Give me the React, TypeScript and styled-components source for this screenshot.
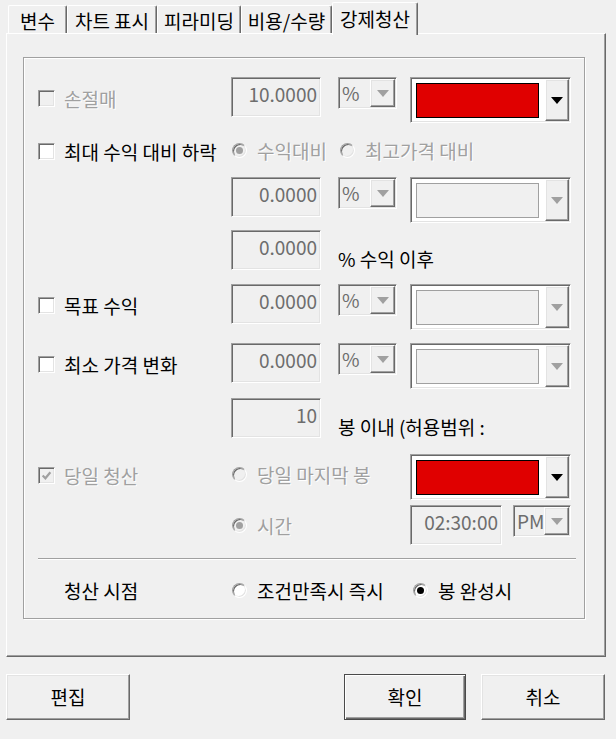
import React from "react";
import styled, { createGlobalStyle, css } from "styled-components";

const GlobalStyle = createGlobalStyle`
  html, body {
    margin: 0;
    padding: 0;
    background: #f0f0f0;
  }
  body {
    font-family: "Noto Sans CJK KR", "Noto Sans", sans-serif;
    font-size: 19px;
    color: #000;
  }
`;

const sunken = css`
  box-sizing: border-box;
  border: 1px solid;
  border-color: #a0a0a0 #ffffff #ffffff #a0a0a0;
  box-shadow: inset 1px 1px 0 #696969, inset -1px -1px 0 #e3e3e3;
`;

const raised = css`
  box-sizing: border-box;
  border: 1px solid;
  border-color: #ffffff #696969 #696969 #ffffff;
  box-shadow: inset -1px -1px 0 #a0a0a0, inset 1px 1px 0 #e3e3e3;
  background: #f0f0f0;
`;

const Window = styled.div`
  width: 616px;
  height: 739px;
  box-sizing: border-box;
  padding: 0 10px 0 6px;
  display: flex;
  flex-direction: column;
  overflow: hidden;
`;

const TabStrip = styled.div`
  height: 34px;
  display: flex;
  align-items: flex-end;
  padding-left: 2px;
`;

const Tab = styled.div<{ $w: number; $active?: boolean }>`
  width: ${(p) => p.$w}px;
  height: ${(p) => (p.$active ? 33 : 29)}px;
  box-sizing: border-box;
  display: flex;
  align-items: center;
  justify-content: center;
  padding-bottom: ${(p) => (p.$active ? 2 : 0)}px;
  border-top: 1px solid #fff;
  border-left: 1px solid #fff;
  border-right: 1px solid #696969;
  border-radius: 2px 2px 0 0;
  box-shadow: inset -1px 0 0 #a0a0a0;
  background: #f0f0f0;
  white-space: nowrap;
  line-height: 1;
  ${(p) =>
    p.$active &&
    css`
      position: relative;
      z-index: 1;
      margin-bottom: -1px;
    `}
`;

const Panel = styled.div`
  flex: none;
  height: 624px;
  margin-top: -1px;
  box-sizing: border-box;
  padding: 23px 20px 0 16px;
  border-top: 1px solid #fff;
  border-left: 1px solid #fff;
  border-right: 1px solid #696969;
  border-bottom: 1px solid #696969;
  box-shadow: inset -1px -1px 0 #a0a0a0;
`;

const GroupBox = styled.div`
  height: 562px;
  box-sizing: border-box;
  padding: 19px 8px 0 14px;
  border: 1px solid #a0a0a0;
  box-shadow: 1px 1px 0 #fff, inset 1px 1px 0 #fff;
`;

const Row = styled.div<{ $h: number }>`
  height: ${(p) => p.$h}px;
  display: grid;
  grid-template-columns: 193px 107px 72px 161px;
  align-items: start;
`;

const Blank = styled.span``;

const CheckLabel = styled.label<{ $disabled?: boolean }>`
  height: 42px;
  display: flex;
  align-items: center;
  gap: 9px;
  white-space: nowrap;
  color: ${(p) => (p.$disabled ? "#a0a0a0" : "#000")};
  text-shadow: ${(p) => (p.$disabled ? "1px 1px 0 #fff" : "none")};
`;

const Box = styled.span<{ $disabled?: boolean }>`
  ${sunken};
  width: 17px;
  height: 17px;
  flex: none;
  display: flex;
  align-items: center;
  justify-content: center;
  background: ${(p) => (p.$disabled ? "#f0f0f0" : "#fff")};
`;

const RadioLabel = styled.label<{ $disabled?: boolean; $indent?: number }>`
  height: 40px;
  margin-left: ${(p) => p.$indent ?? 1}px;
  display: flex;
  align-items: center;
  gap: 10px;
  white-space: nowrap;
  color: ${(p) => (p.$disabled ? "#a0a0a0" : "#000")};
  text-shadow: ${(p) => (p.$disabled ? "1px 1px 0 #fff" : "none")};
`;

const Circle = styled.span<{ $disabled?: boolean }>`
  ${sunken};
  width: 15px;
  height: 15px;
  flex: none;
  border-radius: 50%;
  display: flex;
  align-items: center;
  justify-content: center;
  background: ${(p) => (p.$disabled ? "#f0f0f0" : "#fff")};
`;

const Dot = styled.span<{ $disabled?: boolean }>`
  width: 7px;
  height: 7px;
  border-radius: 50%;
  background: ${(p) => (p.$disabled ? "#a0a0a0" : "#000")};
`;

const Field = styled.div<{ $w: number }>`
  ${sunken};
  width: ${(p) => p.$w}px;
  height: 40px;
  padding: 4px 3px 0 0;
  text-align: right;
  line-height: 24px;
  color: #6d6d6d;
  background: #f0f0f0;
`;

const UnitCombo = styled.div<{ $w: number }>`
  ${sunken};
  width: ${(p) => p.$w}px;
  height: 32px;
  padding: 1px;
  display: flex;
  background: #f0f0f0;
`;

const UnitText = styled.span`
  flex: 1;
  padding-left: 2px;
  line-height: 28px;
  color: #6d6d6d;
  overflow: hidden;
`;

const DropButton = styled.span<{ $w: number }>`
  ${raised};
  width: ${(p) => p.$w}px;
  flex: none;
  display: flex;
  align-items: center;
  justify-content: center;
`;

const Arrow = styled.span<{ $disabled?: boolean }>`
  width: 0;
  height: 0;
  border-left: 6px solid transparent;
  border-right: 6px solid transparent;
  border-top: 7px solid ${(p) => (p.$disabled ? "#a0a0a0" : "#000")};
`;

const ColorCombo = styled.div`
  ${sunken};
  width: 161px;
  height: 46px;
  padding: 1px;
  display: flex;
  background: #fff;
`;

const Swatch = styled.span<{ $color?: string }>`
  flex: 1;
  margin: 4px 6px 3px 4px;
  box-sizing: border-box;
  border: 1px solid ${(p) => (p.$color ? "#000" : "#a0a0a0")};
  background: ${(p) => p.$color ?? "#f0f0f0"};
`;

const Note = styled.span`
  grid-column: span 2;
  margin-top: 18px;
  line-height: 22px;
  white-space: nowrap;
`;

const TimeGroup = styled.div`
  display: flex;
  gap: 11px;
`;

const Separator = styled.div`
  border-top: 1px solid #a0a0a0;
  border-bottom: 1px solid #fff;
`;

const TimingRow = styled(Row)`
  margin-top: 10px;
  align-items: center;
`;

const Caption = styled.span`
  padding-left: 26px;
  white-space: nowrap;
`;

const ButtonBar = styled.div`
  margin-top: 17px;
  margin-right: 1px;
  display: flex;
  gap: 15px;
`;

const PushButton = styled.button<{ $w: number; $default?: boolean; $push?: boolean }>`
  ${raised};
  width: ${(p) => p.$w}px;
  height: 46px;
  margin-left: ${(p) => (p.$push ? "auto" : "0")};
  font: inherit;
  color: #000;
  padding: 0 0 2px;
  ${(p) =>
    p.$default &&
    css`
      border: 1px solid #4a4a4a;
      box-shadow: inset 1px 1px 0 #fff, inset -1px -1px 0 #696969, inset -2px -2px 0 #a0a0a0;
    `}
`;

function CheckMark() {
  return (
    <svg width="11" height="11" viewBox="0 0 10 10">
      <polyline points="1.5,5 4,7.5 8.5,2" fill="none" stroke="#a0a0a0" strokeWidth="2" />
    </svg>
  );
}

function Check({ label, disabled, checked }: { label: string; disabled?: boolean; checked?: boolean }) {
  return (
    <CheckLabel $disabled={disabled}>
      <Box $disabled={disabled}>{checked && <CheckMark />}</Box>
      {label}
    </CheckLabel>
  );
}

function Radio({
  label,
  disabled,
  checked,
  indent,
}: {
  label: string;
  disabled?: boolean;
  checked?: boolean;
  indent?: number;
}) {
  return (
    <RadioLabel $disabled={disabled} $indent={indent}>
      <Circle $disabled={disabled}>{checked && <Dot $disabled={disabled} />}</Circle>
      {label}
    </RadioLabel>
  );
}

function Unit({ text, w = 59 }: { text: string; w?: number }) {
  return (
    <UnitCombo $w={w}>
      <UnitText>{text}</UnitText>
      <DropButton $w={25}>
        <Arrow $disabled />
      </DropButton>
    </UnitCombo>
  );
}

function ColorPick({ color }: { color?: string }) {
  return (
    <ColorCombo>
      <Swatch $color={color} />
      <DropButton $w={24}>
        <Arrow $disabled={!color} />
      </DropButton>
    </ColorCombo>
  );
}

const tabs = [
  { text: "변수", w: 59 },
  { text: "차트 표시", w: 90 },
  { text: "피라미딩", w: 84 },
  { text: "비용/수량", w: 91 },
  { text: "강제청산", w: 86, active: true },
];

export default function App() {
  return (
    <>
      <GlobalStyle />
      <Window>
        <TabStrip>
          {tabs.map((t) => (
            <Tab key={t.text} $w={t.w} $active={t.active}>
              {t.text}
            </Tab>
          ))}
        </TabStrip>
        <Panel>
          <GroupBox>
            <Row $h={53}>
              <Check label="손절매" disabled />
              <Field $w={90}>10.0000</Field>
              <Unit text="%" />
              <ColorPick color="#e00000" />
            </Row>
            <Row $h={47}>
              <Check label="최대 수익 대비 하락" />
              <Radio label="수익대비" disabled checked />
              <Radio label="최고가격 대비" disabled indent={2} />
            </Row>
            <Row $h={53}>
              <Blank />
              <Field $w={90}>0.0000</Field>
              <Unit text="%" />
              <ColorPick />
            </Row>
            <Row $h={54}>
              <Blank />
              <Field $w={90}>0.0000</Field>
              <Note>% 수익 이후</Note>
            </Row>
            <Row $h={59}>
              <Check label="목표 수익" />
              <Field $w={90}>0.0000</Field>
              <Unit text="%" />
              <ColorPick />
            </Row>
            <Row $h={55}>
              <Check label="최소 가격 변화" />
              <Field $w={90}>0.0000</Field>
              <Unit text="%" />
              <ColorPick />
            </Row>
            <Row $h={56}>
              <Blank />
              <Field $w={90}>10</Field>
              <Note>봉 이내 (허용범위 :</Note>
            </Row>
            <Row $h={51}>
              <Check label="당일 청산" disabled checked />
              <Radio label="당일 마지막 봉" disabled />
              <Blank />
              <ColorPick color="#e00000" />
            </Row>
            <Row $h={53}>
              <Blank />
              <Radio label="시간" disabled checked />
              <Blank />
              <TimeGroup>
                <Field $w={92}>02:30:00</Field>
                <Unit text="PM" w={58} />
              </TimeGroup>
            </Row>
            <Separator />
            <TimingRow $h={40}>
              <Caption>청산 시점</Caption>
              <Radio label="조건만족시 즉시" />
              <Blank />
              <Radio label="봉 완성시" checked indent={3} />
            </TimingRow>
          </GroupBox>
        </Panel>
        <ButtonBar>
          <PushButton $w={124}>편집</PushButton>
          <PushButton $w={122} $default $push>
            확인
          </PushButton>
          <PushButton $w={124}>취소</PushButton>
        </ButtonBar>
      </Window>
    </>
  );
}
